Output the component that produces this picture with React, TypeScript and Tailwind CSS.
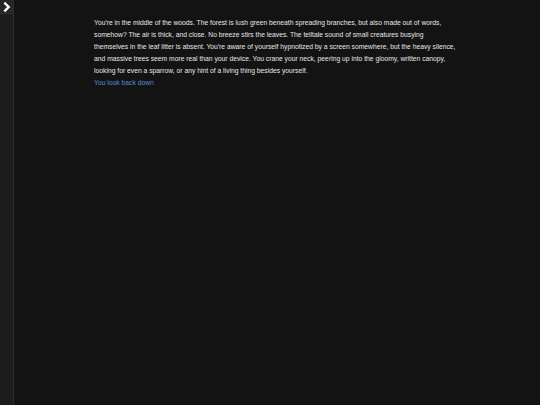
export default function App() {
  return (
    <div className="flex h-[405px] w-full bg-[#131313] font-['Liberation_Sans',Arial,sans-serif]">
      {/* Sidebar */}
      <aside className="flex w-[14px] shrink-0 flex-col border-r border-[#2e2e2e] bg-[#1c1c1c]">
        <button className="flex h-[14px] w-[13px] items-center justify-center border-b border-[#2e2e2e] bg-[#262626] text-white">
          <svg viewBox="0 0 10 10" className="h-[10px] w-[10px]" fill="none" stroke="currentColor" strokeWidth="2.4" strokeLinecap="square">
            <path d="M3.2 1.5 L6.7 5 L3.2 8.5" />
          </svg>
        </button>
      </aside>

      {/* Story */}
      <main className="flex-1 pt-[17px]">
        <div className="mx-auto w-[366px] whitespace-nowrap text-[6.75px] leading-[12px] text-[#e6e6e6]">
          <p>
            You're in the middle of the woods. The forest is lush green beneath spreading branches, but also made out of words,
            <br />
            somehow? The air is thick, and close. No breeze stirs the leaves. The telltale sound of small creatures busying
            <br />
            themselves in the leaf litter is absent. You're aware of yourself hypnotized by a screen somewhere, but the heavy silence,
            <br />
            and massive trees seem more real than your device. You crane your neck, peering up into the gloomy, written canopy,
            <br />
            looking for even a sparrow, or any hint of a living thing besides yourself.
          </p>
          <a href="#" className="text-[#5b8ad6]">You look back down</a>
        </div>
      </main>
    </div>
  );
}
